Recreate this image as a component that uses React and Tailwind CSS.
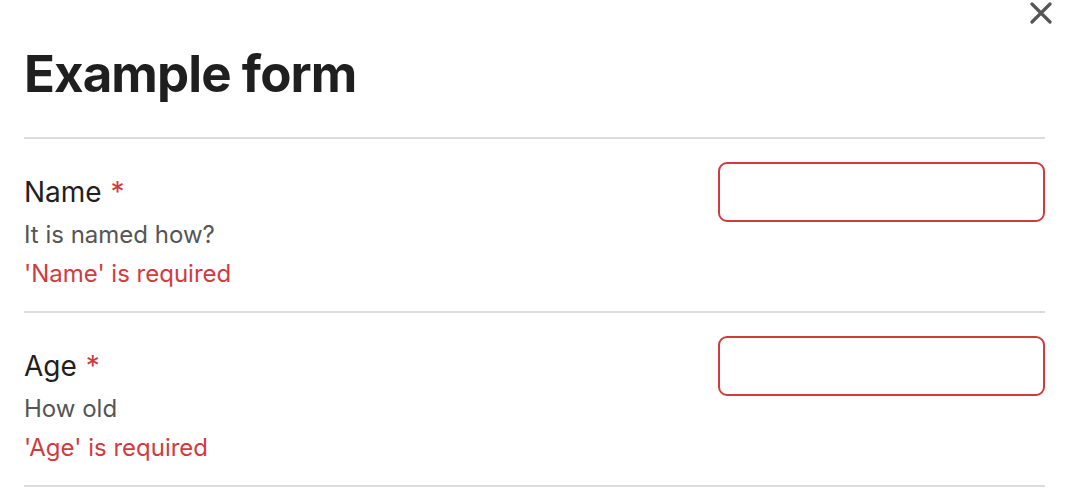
import React from "react";

const fields = [
  { label: "Name", hint: "It is named how?", error: "'Name' is required" },
  { label: "Age", hint: "How old", error: "'Age' is required" },
];

const Field = ({ label, hint, error }) => (
  <div className="flex justify-between border-b-2 border-[#dcdcdc] pt-[23px] h-[174px]">
    <div className="mt-[12px] flex flex-col">
      <label className="text-[28px] leading-[36px] text-[#1f1f1f]">
        {label} <span className="ml-[1px] text-[#d13b3f]">*</span>
      </label>
      <span className="mt-[7px] text-[24px] leading-[36px] text-[#555555]">
        {hint}
      </span>
      <span className="mt-[3px] text-[24px] leading-[36px] text-[#d13b3f]">
        {error}
      </span>
    </div>
    <input
      type="text"
      aria-label={label}
      className="w-[327px] h-[60px] rounded-[9px] border-2 border-[#d13b3f] bg-white outline-none"
    />
  </div>
);

export default function App() {
  return (
    <div
      className="relative h-[488px] w-full overflow-hidden bg-white pl-6 pr-[29px]"
      style={{ fontFamily: "Inter, 'Noto Sans', sans-serif" }}
    >
      <button className="absolute right-[21px] top-[2px] text-[#555555]" aria-label="Close">
        <svg width="24" height="22" viewBox="0 0 24 22" fill="none" stroke="currentColor" strokeWidth="3.2" strokeLinecap="round">
          <path d="M3 2L21 20M21 2L3 20" />
        </svg>
      </button>
      <div className="border-b-2 border-[#dcdcdc] pt-[39px] h-[139px]">
        <h1 className="text-[51px] font-bold leading-[70px] tracking-[-0.9px] text-[#1f1f1f]">
          Example form
        </h1>
      </div>
      {fields.map((f) => (
        <Field key={f.label} {...f} />
      ))}
    </div>
  );
}
